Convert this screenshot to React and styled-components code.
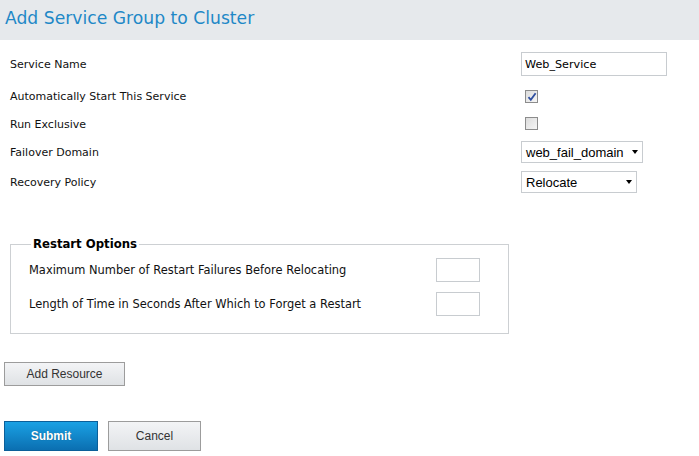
import React from 'react';
import styled, { createGlobalStyle } from 'styled-components';

const GlobalStyle = createGlobalStyle`
  html, body {
    margin: 0;
    padding: 0;
    background: #fff;
  }
  body {
    font-family: "DejaVu Sans", Verdana, sans-serif;
    color: #111;
  }
`;

const Page = styled.div`
  width: 699px;
  min-height: 456px;
  background: #fff;
`;

const Header = styled.div`
  height: 40px;
  background-color: #e6e9ec;
  display: flex;
  align-items: center;
  padding-left: 5px;
`;

const Title = styled.h1`
  margin: 0;
  font-family: "DejaVu Sans", Verdana, sans-serif;
  font-weight: 400;
  font-size: 17.2px;
  color: #1e88c7;
  margin-top: -4px;
`;

const Form = styled.div`
  padding: 12px 0 0 10px;
`;

const Row = styled.div`
  display: grid;
  grid-template-columns: 511px auto;
  align-items: center;
  height: 24px;
  margin-top: ${(p) => p.$top || 0}px;
`;

const Label = styled.span`
  font-size: ${(p) => p.$size || 11}px;
  color: #111;
`;

const TextInput = styled.div`
  box-sizing: border-box;
  width: 146px;
  height: 24px;
  border: 1px solid #c8ccd0;
  padding-left: 3px;
  display: flex;
  align-items: center;
  font-size: 11.2px;
  color: #000;
`;

const CheckBox = styled.span`
  box-sizing: border-box;
  display: inline-flex;
  align-items: center;
  justify-content: center;
  width: 13px;
  height: 13px;
  margin-left: 4px;
  border: 1px solid #8c8c8c;
  background: linear-gradient(135deg, #dcdcdc 0%, #f6f6f6 100%);
`;

const Select = styled.div`
  box-sizing: border-box;
  width: ${(p) => p.$width}px;
  height: 22px;
  border: 1px solid #c8ccd0;
  padding: 0 4px 0 4px;
  display: flex;
  align-items: center;
  justify-content: space-between;
  font-family: "Liberation Sans", Arial, sans-serif;
  font-size: 13px;
  color: #000;
`;

const Arrow = styled.span`
  width: 0;
  height: 0;
  border-left: 3.5px solid transparent;
  border-right: 3.5px solid transparent;
  border-top: 4px solid #000;
`;

const Fieldset = styled.fieldset`
  box-sizing: border-box;
  width: 499px;
  margin: 43px 0 0 10px;
  padding: 0 28px 17px 18px;
  border: 1px solid #cdd0d3;
  min-inline-size: auto;
`;

const Legend = styled.legend`
  margin-left: 2px;
  padding: 0 2px;
  font-size: 11.7px;
  font-weight: 700;
  color: #000;
`;

const OptionRow = styled.div`
  display: flex;
  align-items: center;
  justify-content: space-between;
  margin-top: ${(p) => p.$top}px;
`;

const SmallInput = styled.div`
  box-sizing: border-box;
  width: 44px;
  height: 24px;
  border: 1px solid #c8ccd0;
`;

const Actions = styled.div`
  padding-left: 4px;
`;

const Button = styled.button`
  box-sizing: border-box;
  display: block;
  width: ${(p) => p.$width}px;
  height: ${(p) => p.$height}px;
  margin: 0;
  padding: 0;
  border: 1px solid #9c9c9c;
  background: linear-gradient(#f3f4f6, #dfe2e5);
  font-family: "Liberation Sans", Arial, sans-serif;
  font-size: 12px;
  color: #333;
  cursor: pointer;
`;

const ResourceButton = styled(Button)`
  margin-top: 28px;
`;

const PrimaryButton = styled(Button)`
  border-color: #0b5f99;
  background: linear-gradient(#1aa1e4, #0b6fb1);
  color: #fff;
  font-weight: 700;
  text-shadow: 0 0 1px rgba(0, 0, 0, 0.35);
`;

const ButtonRow = styled.div`
  display: flex;
  gap: 10px;
  margin-top: 35px;
`;

const Check = () => (
  <svg width="10" height="10" viewBox="0 0 10 10">
    <path d="M1.5 5.2 L3.8 7.8 L8.6 1.2" fill="none" stroke="#2f4fa0" strokeWidth="1.8" />
  </svg>
);

const App = () => {
  return (
    <Page>
      <GlobalStyle />
      <Header>
        <Title>Add Service Group to Cluster</Title>
      </Header>
      <Form>
        <Row>
          <Label>Service Name</Label>
          <TextInput>Web_Service</TextInput>
        </Row>
        <Row $top={8}>
          <Label>Automatically Start This Service</Label>
          <div>
            <CheckBox>
              <Check />
            </CheckBox>
          </div>
        </Row>
        <Row $top={4}>
          <Label>Run Exclusive</Label>
          <div>
            <CheckBox />
          </div>
        </Row>
        <Row $top={4}>
          <Label>Failover Domain</Label>
          <Select $width={122}>
            web_fail_domain
            <Arrow />
          </Select>
        </Row>
        <Row $top={6}>
          <Label>Recovery Policy</Label>
          <Select $width={116}>
            Relocate
            <Arrow />
          </Select>
        </Row>
      </Form>
      <Fieldset>
        <Legend>Restart Options</Legend>
        <OptionRow $top={7}>
          <Label $size={11.45}>Maximum Number of Restart Failures Before Relocating</Label>
          <SmallInput />
        </OptionRow>
        <OptionRow $top={10}>
          <Label $size={11.45}>Length of Time in Seconds After Which to Forget a Restart</Label>
          <SmallInput />
        </OptionRow>
      </Fieldset>
      <Actions>
        <ResourceButton $width={121} $height={24}>
          Add Resource
        </ResourceButton>
        <ButtonRow>
          <PrimaryButton $width={94} $height={30}>Submit</PrimaryButton>
          <Button $width={93} $height={30}>Cancel</Button>
        </ButtonRow>
      </Actions>
    </Page>
  );
};

export default App;
